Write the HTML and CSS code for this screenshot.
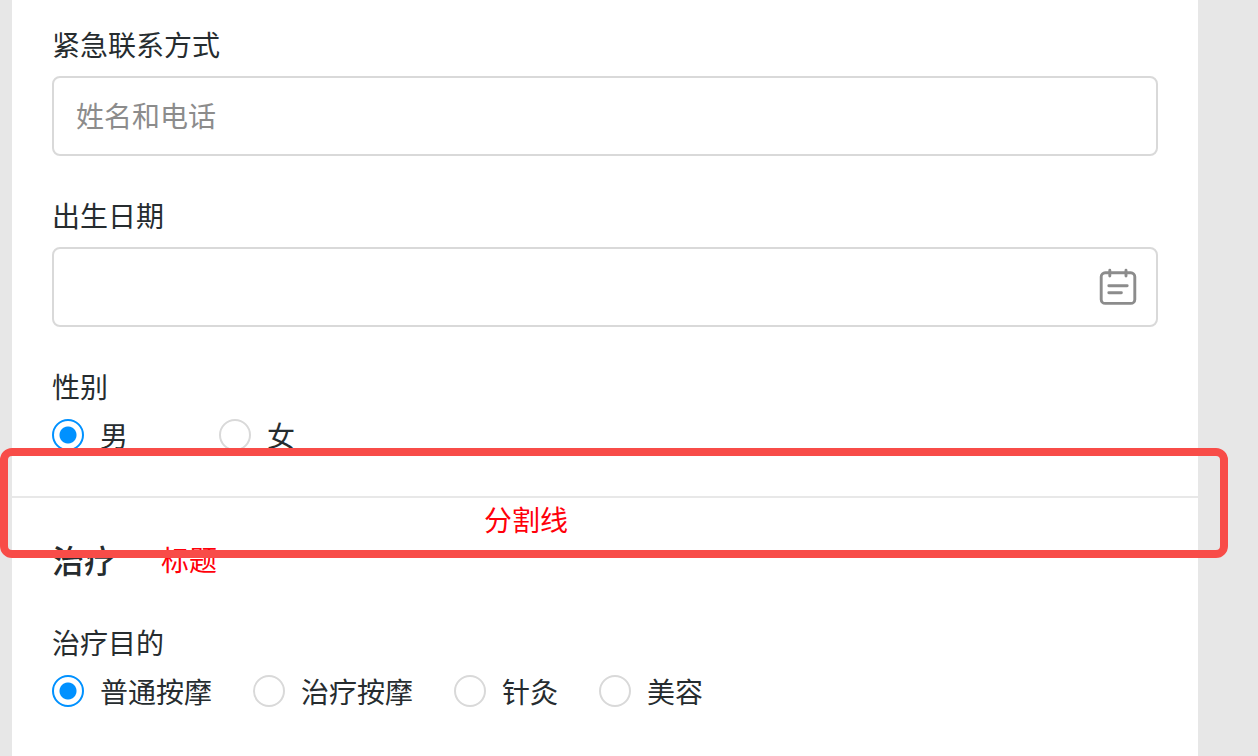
FILE: index.html
```html
<!DOCTYPE html>
<html lang="zh-CN">
<head>
    <meta charset="UTF-8">
    <meta name="viewport" content="width=device-width, initial-scale=1.0">
    <title>治疗</title>
    <link rel="stylesheet" href="styles.css">
</head>
<body>
    <form class="card">
        <div class="field">
            <label class="label" for="contact">紧急联系方式</label>
            <input class="input" id="contact" type="text" placeholder="姓名和电话">
        </div>
        <div class="field">
            <label class="label" for="birthday">出生日期</label>
            <div class="date-box">
                <input class="date-input" id="birthday" type="text">
                <button class="date-btn" type="button" aria-label="出生日期">
                    <svg width="40" height="40" viewBox="0 0 40 40" fill="none" stroke="#8c8c8c" stroke-width="2.9" stroke-linecap="round">
                        <rect x="3.2" y="5.8" width="33.6" height="30.6" rx="4"/>
                        <path d="M11.8 3.3v5.8M28 3.3v5.8M10.8 18.7h18.4M10.8 25.8h12.6"/>
                    </svg>
                </button>
            </div>
        </div>
        <fieldset class="group">
            <legend class="label">性别</legend>
            <div class="radios">
                <label class="radio radio-wide"><input type="radio" name="sex" checked>男</label>
                <label class="radio radio-wide"><input type="radio" name="sex">女</label>
            </div>
        </fieldset>

        <div class="divider">
            <!-- 红框标注 -->
            <div class="mark"><span class="note">分割线</span></div>
        </div>

        <div class="title-row">
            <h2 class="title">治疗</h2>
            <span class="note">标题</span>
        </div>
        <fieldset class="group">
            <legend class="label">治疗目的</legend>
            <div class="radios">
                <label class="radio"><input type="radio" name="goal" checked>普通按摩</label>
                <label class="radio"><input type="radio" name="goal">治疗按摩</label>
                <label class="radio"><input type="radio" name="goal">针灸</label>
                <label class="radio"><input type="radio" name="goal">美容</label>
            </div>
        </fieldset>
    </form>
</body>
</html>
```
FILE: styles.css
```css
* {
    box-sizing: border-box;
}
body {
    margin: 0;
    padding: 0 60px 0 12px;
    background: #e7e7e7;
    font-family: "Noto Sans CJK SC", sans-serif;
    font-size: 28px;
    line-height: 40px;
    color: #262c2f;
}
.card {
    min-height: 100vh;
    padding: 24px 0 40px;
    background: #fff;
}
.field {
    margin: 0 40px 39px;
}
.label {
    display: block;
    padding: 0;
}
.input,
.date-box {
    display: block;
    width: 100%;
    height: 80px;
    margin-top: 12px;
    padding: 0 22px 2px;
    border: 2px solid #d9d9d9;
    border-radius: 8px;
    background: #fff;
    font: inherit;
    color: inherit;
}
.input::placeholder {
    color: #8c8c8c;
    opacity: 1;
}
.date-box {
    display: flex;
    align-items: center;
    padding: 0 18px 0 22px;
}
.date-input {
    flex: 1;
    min-width: 0;
    border: 0;
    outline: 0;
    font: inherit;
}
.date-btn {
    display: flex;
    padding: 0;
    border: 0;
    background: none;
    cursor: pointer;
}
.group {
    margin: 0 40px;
    padding: 0;
    border: 0;
}
.radios {
    display: flex;
    flex-wrap: wrap;
    gap: 8px 41px;
    margin-top: 9px;
}
.radio {
    display: flex;
    align-items: center;
    gap: 16px;
    cursor: pointer;
}
.radio-wide {
    min-width: 126px;
}
.radio input {
    appearance: none;
    width: 32px;
    height: 32px;
    margin: 0;
    border: 2px solid #d9d9d9;
    border-radius: 50%;
}
.radio input:checked {
    border-color: #0091ff;
    background: radial-gradient(circle, #0091ff 8px, #fff 9px);
}
.divider {
    position: relative;
    margin-top: 41px;
    border-top: 2px solid #e8e8e8;
}
/* 标注框盖在分割线上下的内容上 */
.mark {
    position: absolute;
    top: -50px;
    left: -12px;
    right: -30px;
    height: 110px;
    padding: 43px 0 0 476px;
    border: 8px solid #f84c48;
    border-radius: 12px;
    pointer-events: none;
}
.note {
    color: #ff000a;
}
.title-row {
    display: flex;
    align-items: center;
    gap: 45px;
    margin: 37px 40px 39px;
}
.title {
    margin: 0;
    font-size: 32px;
    line-height: 48px;
    font-weight: 500;
}
```
